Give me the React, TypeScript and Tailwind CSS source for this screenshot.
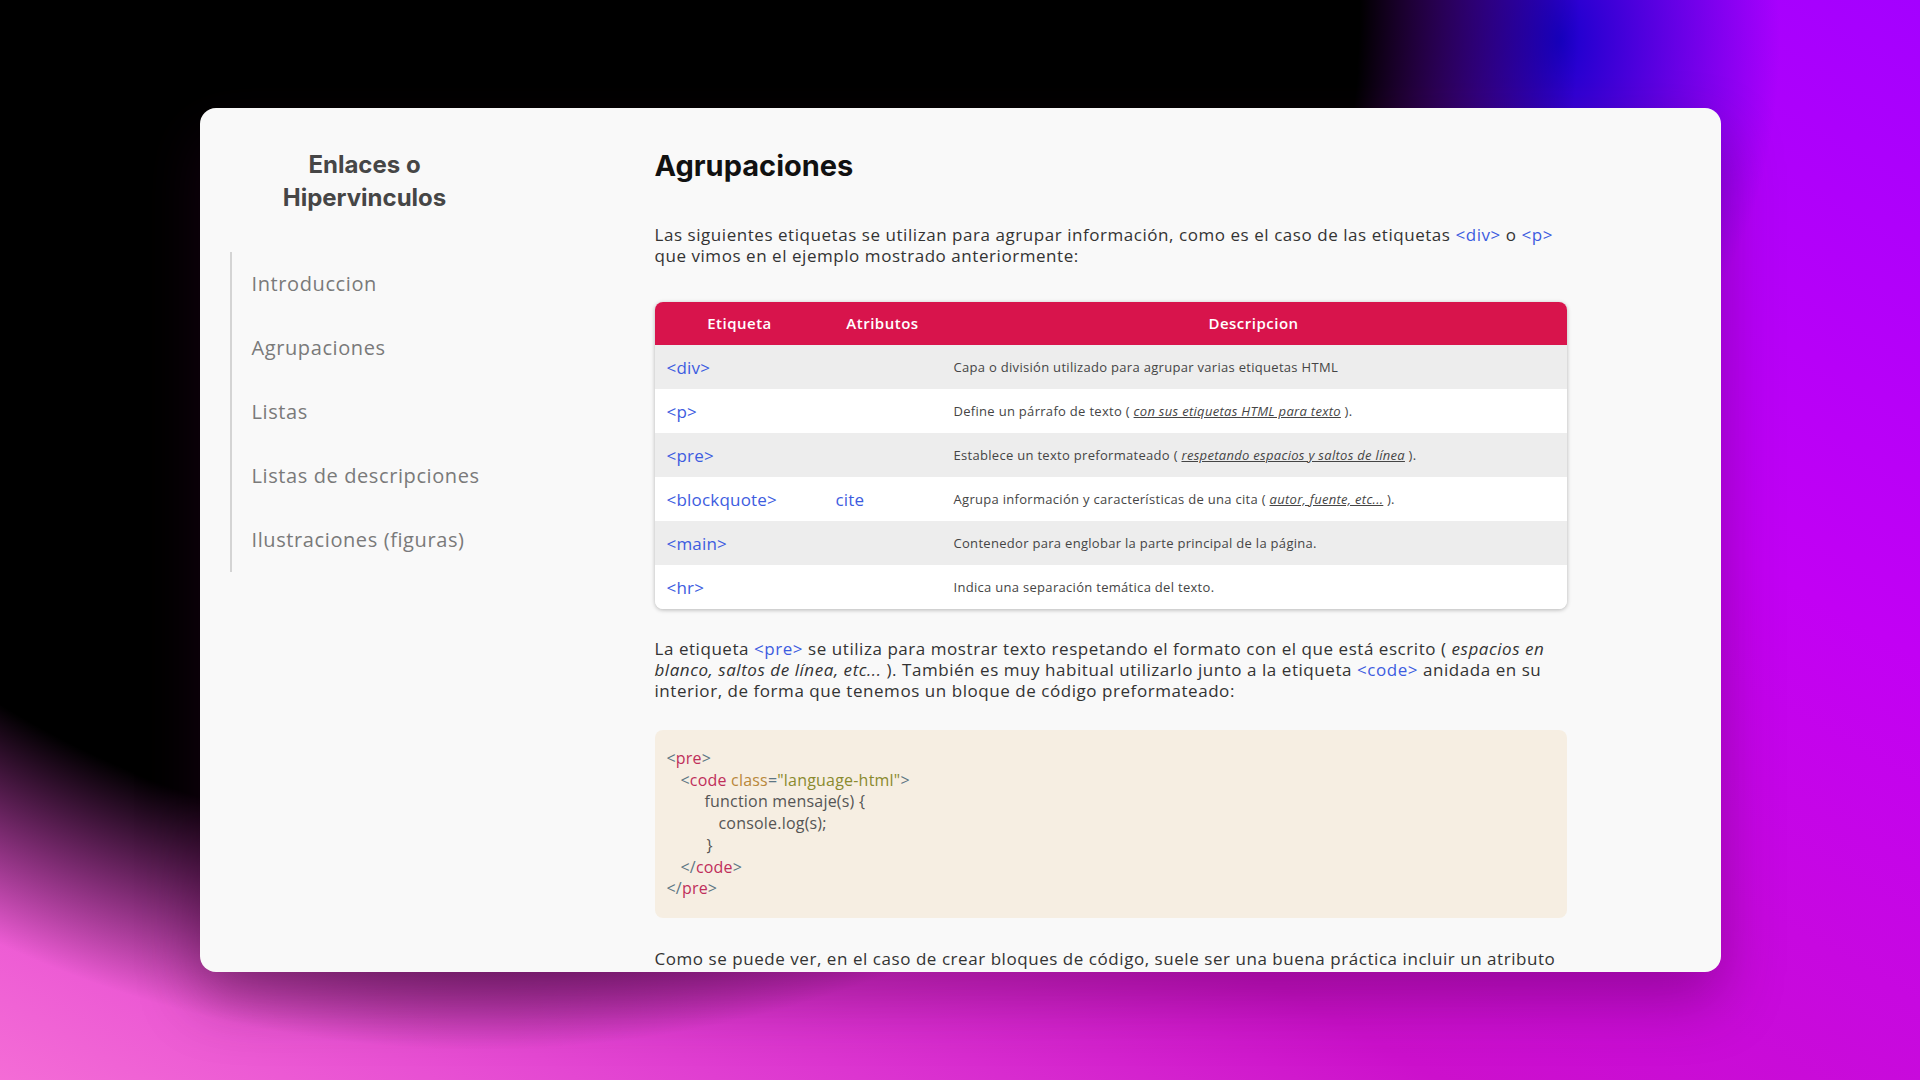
import type { ReactNode } from "react";

const bodyFont = "font-['Open_Sans','DejaVu_Sans',sans-serif]";
const headFont = "font-['Inter','Liberation_Sans',sans-serif]";

const navItems = [
  "Introduccion",
  "Agrupaciones",
  "Listas",
  "Listas de descripciones",
  "Ilustraciones (figuras)",
];

type Row = { tag: string; attr?: string; desc: ReactNode };

function Em({ children }: { children: ReactNode }) {
  return <span className="italic underline">{children}</span>;
}

const rows: Row[] = [
  { tag: "<div>", desc: "Capa o división utilizado para agrupar varias etiquetas HTML" },
  {
    tag: "<p>",
    desc: (
      <>
        Define un párrafo de texto ( <Em>con sus etiquetas HTML para texto</Em> ).
      </>
    ),
  },
  {
    tag: "<pre>",
    desc: (
      <>
        Establece un texto preformateado ( <Em>respetando espacios y saltos de línea</Em> ).
      </>
    ),
  },
  {
    tag: "<blockquote>",
    attr: "cite",
    desc: (
      <>
        Agrupa información y características de una cita ( <Em>autor, fuente, etc...</Em> ).
      </>
    ),
  },
  { tag: "<main>", desc: "Contenedor para englobar la parte principal de la página." },
  { tag: "<hr>", desc: "Indica una separación temática del texto." },
];

function Tag({ children }: { children: ReactNode }) {
  return <span className="text-[#3d5ce0]">{children}</span>;
}

// code block pieces
function P({ children }: { children: ReactNode }) {
  return <span className="text-[#5d7684]">{children}</span>;
}
function N({ children }: { children: ReactNode }) {
  return <span className="text-[#bf2f5b]">{children}</span>;
}

function CodeBlock() {
  return (
    <div className="mt-[29px] rounded-lg bg-[#f6eee2] px-3 py-[18px] text-[16px] leading-[21.7px] tracking-[0.2px] text-[#555]">
      <div>
        <P>&lt;</P>
        <N>pre</N>
        <P>&gt;</P>
      </div>
      <div className="pl-[14px]">
        <P>&lt;</P>
        <N>code</N> <span className="text-[#b9873a]">class</span>
        <P>=</P>
        <span className="text-[#8a8a2e]">"language-html"</span>
        <P>&gt;</P>
      </div>
      <div className="pl-[38px]">function mensaje(s) {"{"}</div>
      <div className="pl-[52px]">console.log(s);</div>
      <div className="pl-[40px]">{"}"}</div>
      <div className="pl-[14px]">
        <P>&lt;/</P>
        <N>code</N>
        <P>&gt;</P>
      </div>
      <div>
        <P>&lt;/</P>
        <N>pre</N>
        <P>&gt;</P>
      </div>
    </div>
  );
}

function Sidebar() {
  return (
    <aside className="w-[330px] shrink-0 pt-10">
      <h2
        className={`${headFont} text-center text-[24px] font-bold leading-[33px] text-[#464646]`}
      >
        Enlaces o<br />
        Hipervinculos
      </h2>
      <ul className="ml-[30px] mt-[38px] border-l-2 border-[#d4d4d4]">
        {navItems.map((item) => (
          <li
            key={item}
            className={`${bodyFont} flex h-16 items-center pl-[20px] text-[20px] tracking-[0.6px] text-[#7a7a7a]`}
          >
            {item}
          </li>
        ))}
      </ul>
    </aside>
  );
}

export default function App() {
  return (
    <div className="flex h-[1080px] w-full justify-center overflow-hidden bg-[radial-gradient(ellipse_1100px_1050px_at_480px_0px,#000_0%,#000_80%,rgba(0,0,0,0)_100%),radial-gradient(ellipse_220px_360px_at_1560px_40px,#1800cc_0%,rgba(24,0,204,0)_100%),linear-gradient(210deg,#a400ff_0%,#c200f4_30%,#cc10cc_62%,#f46cd6_100%)] pt-[108px]">
      <div
        className={`${bodyFont} flex h-[864px] w-[1521px] overflow-hidden rounded-2xl bg-[#f9f9f9] shadow-[0_28px_60px_rgba(60,0,50,0.35)]`}
      >
        <Sidebar />
        <main className="ml-[125px] w-[912px] shrink-0 pt-10 text-[17px] leading-[21px] tracking-[0.55px] text-[#333]">
          <h1
            className={`${headFont} text-[29px] font-bold leading-9 tracking-normal text-[#111]`}
          >
            Agrupaciones
          </h1>
          <p className="mt-[40px] whitespace-nowrap">
            Las siguientes etiquetas se utilizan para agrupar información, como es
            el caso de las etiquetas <Tag>&lt;div&gt;</Tag> o <Tag>&lt;p&gt;</Tag>
            <br />
            que vimos en el ejemplo mostrado anteriormente:
          </p>

          <div className="mt-[36px] overflow-hidden rounded-lg shadow-[0_1px_4px_rgba(0,0,0,0.28)]">
            <table className="w-full table-fixed border-collapse">
              <colgroup>
                <col className="w-[170px]" />
                <col className="w-[116px]" />
                <col />
              </colgroup>
              <thead>
                <tr className="h-[43px] bg-[#d8144c] text-[15px] tracking-[0.5px] text-white">
                  <th className="font-semibold">Etiqueta</th>
                  <th className="font-semibold">Atributos</th>
                  <th className="font-semibold">Descripcion</th>
                </tr>
              </thead>
              <tbody>
                {rows.map((row, i) => (
                  <tr
                    key={row.tag}
                    className={i % 2 === 0 ? "h-11 bg-[#ededed]" : "h-11 bg-white"}
                  >
                    <td className="px-3 text-[17px] tracking-[0.2px] text-[#3d5ce0]">
                      {row.tag}
                    </td>
                    <td className="px-[11px] text-[17px] tracking-[0.2px] text-[#3d5ce0]">
                      {row.attr}
                    </td>
                    <td className="px-[13px] text-[13px] tracking-[0.3px] text-[#454545]">
                      {row.desc}
                    </td>
                  </tr>
                ))}
              </tbody>
            </table>
          </div>

          <p className="mt-[29px] whitespace-nowrap">
            La etiqueta <Tag>&lt;pre&gt;</Tag> se utiliza para mostrar texto
            respetando el formato con el que está escrito ({" "}
            <span className="italic">espacios en</span>
            <br />
            <span className="italic">blanco, saltos de línea, etc...</span> ).
            También es muy habitual utilizarlo junto a la etiqueta{" "}
            <Tag>&lt;code&gt;</Tag> anidada en su
            <br />
            interior, de forma que tenemos un bloque de código preformateado:
          </p>

          <CodeBlock />

          <p className="mt-[30px] whitespace-nowrap">
            Como se puede ver, en el caso de crear bloques de código, suele ser
            una buena práctica incluir un atributo
          </p>
        </main>
      </div>
    </div>
  );
}
